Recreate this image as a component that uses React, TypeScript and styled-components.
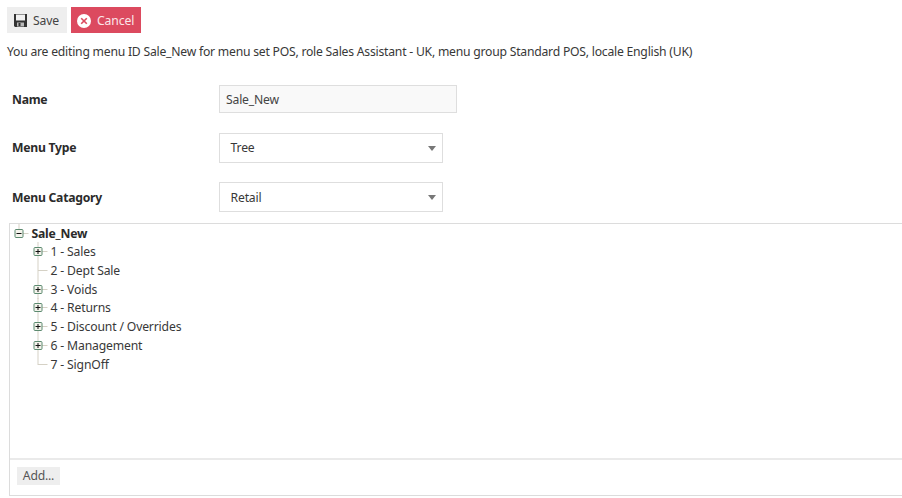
import React from "react";
import styled, { createGlobalStyle } from "styled-components";

const GlobalStyle = createGlobalStyle`
  * { box-sizing: border-box; }
  html, body { margin: 0; overflow: hidden; background: #fff; }
  body { font: 12.2px/18px "Noto Sans", "Open Sans", sans-serif; color: #383838; letter-spacing: -0.16px; }
`;

const Page = styled.main`
  width: 902px;
  height: 498px;
  padding-top: 7px;
  overflow: hidden;
  display: flex;
  flex-direction: column;
`;

const Toolbar = styled.div`
  display: flex;
  gap: 4px;
  padding-left: 7px;
`;

const ToolButton = styled.button<{ $danger?: boolean }>`
  display: flex;
  align-items: center;
  width: ${(p) => (p.$danger ? 70 : 60)}px;
  height: 26px;
  padding: 1px 0 0 ${(p) => (p.$danger ? 6 : 7)}px;
  gap: 6px;
  border: 0;
  font: inherit;
  letter-spacing: -0.12px;
  white-space: nowrap;
  color: ${(p) => (p.$danger ? "#fbe6e9" : "#444")};
  background: ${(p) => (p.$danger ? "#dc4a5f" : "#eee")};
  svg { flex: none; }
`;

const Notice = styled.p`
  margin: 10px 0 0 7px;
  height: 18px;
  letter-spacing: -0.23px;
  white-space: nowrap;
`;

const Form = styled.div`
  display: grid;
  grid-template-columns: 207px auto;
  grid-template-rows: 28px 30px 30px;
  row-gap: 19.5px;
  align-items: center;
  justify-content: start;
  margin: 24px 0 0 12px;
  height: 138px;
`;

const Label = styled.label`
  padding-top: 1px;
  font-weight: 700;
  letter-spacing: -0.25px;
  color: #2b2b2b;
`;

const TextInput = styled.input`
  width: 238px;
  height: 28px;
  border: 1px solid #dedede;
  background: #f9f9f9;
  padding: 0 6px;
  font: inherit;
  letter-spacing: -0.2px;
  color: #444;
  outline: 0;
`;

const Select = styled.div`
  display: flex;
  align-items: center;
  justify-content: space-between;
  width: 224px;
  height: 30px;
  border: 1px solid #dedede;
  padding: 1px 6px 0 10.5px;
`;

const Caret = styled.i`
  border: 4px solid transparent;
  border-top: 5px solid #777;
  border-bottom: 0;
`;

const Panel = styled.section`
  display: flex;
  flex-direction: column;
  margin: 0 -4px 0 9px;
  height: 273px;
  border: 1px solid #dcdcdc;
`;

const Tree = styled.div`
  height: 236px;
  border-bottom: 2px solid #eaeaea;
`;

const RootNode = styled.div`
  display: flex;
  height: 18px;
  padding-left: 4px;
  font-weight: 700;
  letter-spacing: -0.2px;
  color: #2b2b2b;
`;

const Branch = styled.ul`
  margin: 0;
  padding: 0 0 0 23px;
  list-style: none;
`;

const Node = styled.li`
  display: flex;
  height: 18.8px;
`;

const NodeLabel = styled.span`
  line-height: 19px;
  white-space: nowrap;
`;

const Joint = styled.svg`
  flex: none;
  width: 17.5px;
  height: 18.8px;
  overflow: visible;
`;

const Footer = styled.footer`
  padding: 7px 0 0 7px;
`;

const AddButton = styled.button`
  width: 43px;
  height: 18px;
  padding: 0;
  border: 0;
  background: #eee;
  color: #555;
  font: inherit;
  letter-spacing: -0.2px;
  line-height: 18px;
`;

type NodeKind = "root" | "closed" | "leaf" | "last";

function Connector({ kind }: { kind: NodeKind }) {
  const box = kind === "root" || kind === "closed";
  const end = kind === "root" || kind === "last" ? 10 : 19;
  return (
    <Joint aria-hidden="true">
      <path d={`M5 0V${end}M5 9.5H14.5`} stroke="#d5d1c5" fill="none" />
      {box && (
        <>
          <rect x="1" y="5.5" width="8" height="8" rx="1" fill="#f4f4ec" stroke="#5c8a70" />
          <path d={kind === "root" ? "M2.5 9.5h5" : "M2.5 9.5h5M5 7v5"} stroke="#111" />
        </>
      )}
    </Joint>
  );
}

function SaveIcon() {
  return (
    <svg width="13" height="13" viewBox="0 0 13 13" aria-hidden="true">
      <path d="M0 0H13V13H1L0 12Z" fill="#333" />
      <path d="M2 .5H11V6.5H2Z" fill="#f1f1f1" />
      <path d="M3 8.5H10V12.5H3Z" fill="#bbb" />
      <path d="M4.5 9H6.5V12H4.5Z" fill="#333" />
    </svg>
  );
}

function CancelIcon() {
  return (
    <svg width="14" height="14" viewBox="0 0 14 14" aria-hidden="true">
      <circle cx="7" cy="7" r="7" fill="#fff" />
      <path d="M4.2 4.2 9.8 9.8M9.8 4.2 4.2 9.8" stroke="#dc4a5f" strokeWidth="1.6" />
    </svg>
  );
}

const nodes: { label: string; kind: NodeKind }[] = [
  { label: "1 - Sales", kind: "closed" },
  { label: "2 - Dept Sale", kind: "leaf" },
  { label: "3 - Voids", kind: "closed" },
  { label: "4 - Returns", kind: "closed" },
  { label: "5 - Discount / Overrides", kind: "closed" },
  { label: "6 - Management", kind: "closed" },
  { label: "7 - SignOff", kind: "last" },
];

export default function App() {
  return (
    <>
      <GlobalStyle />
      <Page>
        <Toolbar>
          <ToolButton><SaveIcon />Save</ToolButton>
          <ToolButton $danger><CancelIcon />Cancel</ToolButton>
        </Toolbar>
        <Notice>
          You are editing menu ID Sale_New for menu set POS, role Sales Assistant - UK, menu group Standard POS, locale English (UK)
        </Notice>
        <Form>
          <Label htmlFor="name">Name</Label>
          <TextInput id="name" defaultValue="Sale_New" readOnly />
          <Label>Menu Type</Label>
          <Select>Tree<Caret /></Select>
          <Label>Menu Catagory</Label>
          <Select>Retail<Caret /></Select>
        </Form>
        <Panel>
          <Tree>
            <RootNode>
              <Connector kind="root" />
              <NodeLabel>Sale_New</NodeLabel>
            </RootNode>
            <Branch>
              {nodes.map((n) => (
                <Node key={n.label}>
                  <Connector kind={n.kind} />
                  <NodeLabel>{n.label}</NodeLabel>
                </Node>
              ))}
            </Branch>
          </Tree>
          <Footer><AddButton>Add...</AddButton></Footer>
        </Panel>
      </Page>
    </>
  );
}
